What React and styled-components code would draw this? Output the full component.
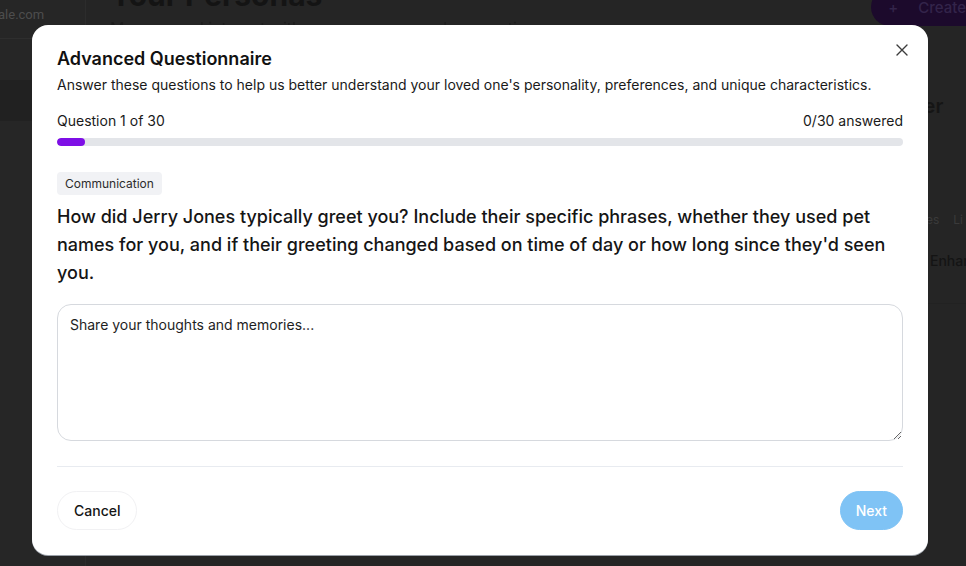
import React from "react";
import styled, { createGlobalStyle } from "styled-components";

const Global = createGlobalStyle`
  html, body { margin: 0; padding: 0; }
  body {
    width: 966px; height: 566px; overflow: hidden;
    font-family: Inter, "Noto Sans", sans-serif;
    background: #252525;
    -webkit-font-smoothing: antialiased;
  }
  * { box-sizing: border-box; }
`;

const Page = styled.div`
  position: relative;
  width: 966px;
  height: 566px;
  display: grid;
  grid-template-columns: 86px 1fr;
  overflow: hidden;
  background: #252525;
`;

const Sidebar = styled.aside`
  display: flex;
  flex-direction: column;
  border-right: 1px solid #2c2c2c;
  background: #262626;
  overflow: hidden;
`;

const SideHeader = styled.div`
  height: 39px;
  border-bottom: 1px solid #2e2e2e;
  display: flex;
  align-items: flex-start;
  padding-top: 7px;
  color: #4d4d4d;
  font-family: Roboto, sans-serif;
  font-size: 13px;
  line-height: 16px;
  white-space: nowrap;
  text-indent: -2px;
`;

const SideRow = styled.div`
  height: ${(p) => p.$h}px;
  background: ${(p) => (p.$active ? "#212121" : "transparent")};
  color: #3c3c3c;
  font-size: 16px;
  display: flex;
  align-items: center;
  white-space: nowrap;
`;

const SideLabel = styled.span`
  margin-left: -9px;
`;

const Main = styled.main`
  display: flex;
  flex-direction: column;
  padding: 0 0 0 24px;
  position: relative;
  overflow: hidden;
`;

const TopBar = styled.div`
  display: flex;
  justify-content: space-between;
  align-items: flex-start;
  margin-top: -22px;
  margin-right: -14px;
`;

const PageTitle = styled.h1`
  margin: 0;
  font-size: 30px;
  font-weight: 700;
  color: #141414;
  line-height: 34px;
`;

const PageSub = styled.p`
  margin: 6px 0 0;
  font-size: 16px;
  color: #1c1c1c;
  filter: blur(0.6px);
`;

const CreateBtn = styled.div`
  margin-top: 10px;
  height: 38px;
  padding: 0 14px 0 17px;
  border-radius: 19px 0 0 19px;
  background: #1c0a2c;
  color: #33244a;
  font-size: 15px;
  font-weight: 500;
  display: flex;
  align-items: center;
  gap: 20px;
`;

const SideCard = styled.div`
  position: absolute;
  right: -30px;
  top: 88px;
  width: 100px;
  height: 216px;
  display: flex;
  flex-direction: column;
  padding: 6px 0 0 16px;
  color: #111;
  border-bottom: 1px solid #222;
`;

const CardTitle = styled.div`
  font-size: 20px;
  font-weight: 600;
  line-height: 24px;
  color: #151515;
`;

const CardTabs = styled.div`
  margin-top: 94px;
  margin-left: 11px;
  display: flex;
  gap: 14px;
  font-size: 12px;
  color: #3a3a3a;
`;

const CardItem = styled.div`
  margin-top: 25px;
  margin-left: 18px;
  font-size: 14px;
  font-weight: 500;
  color: #141414;
  white-space: nowrap;
`;

const Modal = styled.div`
  position: absolute;
  left: 32px;
  top: 25px;
  width: 896px;
  height: 530px;
  background: #ffffff;
  border-radius: 16px;
  padding: 20px 25px 25px;
  display: flex;
  flex-direction: column;
  box-shadow: 0 1px 0 #9aa0a8;
  color: #111;
`;

const CloseBtn = styled.button`
  position: absolute;
  top: 18px;
  right: 19px;
  width: 14px;
  height: 14px;
  padding: 0;
  border: none;
  background: none;
  color: #3c3c3c;
  display: flex;
  align-items: center;
  justify-content: center;
`;

const Title = styled.h2`
  margin: 0;
  font-size: 18px;
  line-height: 28px;
  font-weight: 600;
  color: #111;
`;

const Subtitle = styled.p`
  margin: 2px 0 0;
  font-size: 14px;
  line-height: 20px;
  color: #1a1a1a;
`;

const ProgressHead = styled.div`
  margin-top: 16px;
  display: flex;
  justify-content: space-between;
  font-size: 14px;
  line-height: 20px;
  color: #1a1a1a;
`;

const Track = styled.div`
  margin-top: 7px;
  height: 8px;
  border-radius: 4px;
  background: #e3e5e9;
  overflow: hidden;
`;

const Fill = styled.div`
  height: 100%;
  border-radius: 4px;
  background: #7e0fe6;
`;

const Tag = styled.span`
  align-self: flex-start;
  margin-top: 26px;
  height: 23px;
  padding: 0 8px;
  border-radius: 4px;
  background: #f1f2f5;
  color: #2c2c2c;
  font-size: 12px;
  display: inline-flex;
  align-items: center;
`;

const Question = styled.p`
  margin: 8px 0 0;
  font-size: 18px;
  line-height: 28px;
  font-weight: 500;
  color: #151515;
`;

const Answer = styled.textarea`
  margin-top: 17px;
  height: 138px;
  border: 1px solid #d6d9de;
  border-radius: 14px;
  padding: 10px 12px;
  font-family: inherit;
  font-size: 14px;
  line-height: 20px;
  resize: vertical;
  outline: none;
  color: #111;
  &::placeholder { color: #1e1e1e; opacity: 1; }
`;

const Divider = styled.hr`
  margin: 25px 0 0;
  border: none;
  border-top: 1px solid #e8ebf0;
`;

const Footer = styled.div`
  margin-top: 24px;
  display: flex;
  justify-content: space-between;
  align-items: center;
`;

const Button = styled.button`
  height: 39px;
  padding: 0 ${(p) => (p.$primary ? 15 : 16)}px;
  border-radius: 20px;
  font-family: inherit;
  font-size: 14px;
  font-weight: 500;
  border: 1px solid ${(p) => (p.$primary ? "#7fc3f5" : "#f1f1f3")};
  background: ${(p) => (p.$primary ? "#7fc3f5" : "#fff")};
  color: ${(p) => (p.$primary ? "#ffffff" : "#151515")};
  cursor: pointer;
`;

export default function App() {
  const answered = 1;
  const total = 30;
  return (
    <>
      <Global />
      <Page>
        <Sidebar>
          <SideHeader>ale.com</SideHeader>
          <SideRow $h={41} />
          <SideRow $h={41} $active />
          <SideRow $h={50}>
            <SideLabel>e</SideLabel>
          </SideRow>
        </Sidebar>
        <Main>
          <TopBar>
            <div>
              <PageTitle>Your Personas</PageTitle>
              <PageSub>Manage and interact with your personas and connections</PageSub>
            </div>
            <CreateBtn>
              <span>+</span>
              <span>Create</span>
            </CreateBtn>
          </TopBar>
          <SideCard>
            <CardTitle>Jer</CardTitle>
            <CardTabs>
              <span>ies</span>
              <span>Li</span>
            </CardTabs>
            <CardItem>Enhance</CardItem>
          </SideCard>
        </Main>
        <Modal>
          <CloseBtn aria-label="Close">
            <svg width="12" height="12" viewBox="0 0 12 12" fill="none" stroke="currentColor" strokeWidth="1.4" strokeLinecap="round">
              <path d="M1 1L11 11M11 1L1 11" />
            </svg>
          </CloseBtn>
          <Title>Advanced Questionnaire</Title>
          <Subtitle>
            Answer these questions to help us better understand your loved one's personality, preferences, and unique characteristics.
          </Subtitle>
          <ProgressHead>
            <span>Question 1 of 30</span>
            <span>0/30 answered</span>
          </ProgressHead>
          <Track>
            <Fill style={{ width: `${(answered / total) * 100}%` }} />
          </Track>
          <Tag>Communication</Tag>
          <Question>
            How did Jerry Jones typically greet you? Include their specific phrases, whether they used pet names for you, and if their greeting changed based on time of day or how long since they'd seen you.
          </Question>
          <Answer placeholder="Share your thoughts and memories..." />
          <Divider />
          <Footer>
            <Button>Cancel</Button>
            <Button $primary>Next</Button>
          </Footer>
        </Modal>
      </Page>
    </>
  );
}
